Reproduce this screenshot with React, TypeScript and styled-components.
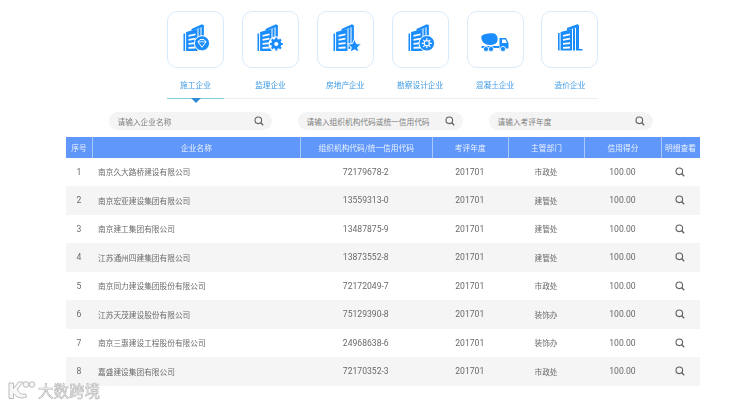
import React from "react";
import styled, { createGlobalStyle } from "styled-components";

const Global = createGlobalStyle`
  html, body { margin: 0; padding: 0; background: #fff; }
  body { font-family: "Noto Sans CJK SC", "Noto Sans", sans-serif; overflow: hidden; }
`;

const Page = styled.div`
  position: relative;
  width: 754px;
  height: 405px;
  padding-top: 11px;
  box-sizing: border-box;
  filter: blur(0.35px);
`;

const Tabs = styled.nav`
  display: flex;
  gap: 17.9px;
  width: 431px;
  height: 87px;
  margin-left: 167px;
  border-bottom: 1px solid #ebeff3;
`;

const Tab = styled.div<{ $active?: boolean }>`
  position: relative;
  width: 57px;
  height: 88px;
  box-sizing: border-box;
  display: flex;
  flex-direction: column;
  align-items: center;
  border-bottom: 1px solid ${(p) => (p.$active ? "#7fd0dc" : "transparent")};
  ${(p) =>
    p.$active &&
    `&::after {
      content: "";
      position: absolute;
      left: 24px;
      top: 87px;
      border-left: 5px solid transparent;
      border-right: 5px solid transparent;
      border-top: 5px solid #2f8ad6;
    }`}
`;

const Tile = styled.div`
  width: 57px;
  height: 57px;
  box-sizing: border-box;
  border: 1px solid #d8ebfc;
  border-radius: 10px;
  display: flex;
  align-items: center;
  justify-content: center;
`;

const TabLabel = styled.span`
  margin-top: 11px;
  font-size: 7.7px;
  line-height: 12px;
  color: #3f9be6;
  white-space: nowrap;
`;

const Searches = styled.div`
  display: flex;
  gap: 26px;
  margin: 13px 0 0 109px;
`;

const SearchBox = styled.div<{ $w: number }>`
  width: ${(p) => p.$w}px;
  height: 18px;
  border-radius: 9px;
  background: #f4f4f4;
  display: flex;
  align-items: center;
  justify-content: space-between;
  box-sizing: border-box;
  padding: 0 8px 0 8.5px;
  font-size: 7.7px;
  color: #808080;
  white-space: nowrap;
`;

const Table = styled.div`
  width: 633.5px;
  margin: 7px 0 0 66px;
`;

const cols = "26px 208px 131.5px 76.5px 76px 77px 38px";

const HeadRow = styled.div`
  display: grid;
  grid-template-columns: ${cols};
  height: 20.5px;
  background: #6097fb;
`;

const HeadCell = styled.div`
  display: flex;
  align-items: center;
  justify-content: center;
  font-size: 7.7px;
  color: #e9f1ff;
  white-space: nowrap;
  border-left: 1px solid #a9c8fc;
  &:first-child { border-left: 0; }
`;

const Row = styled.div<{ $even: boolean }>`
  display: grid;
  grid-template-columns: ${cols};
  height: 28.5px;
  background: ${(p) => (p.$even ? "#f5f5f5" : "#fff")};
`;

const Cell = styled.div<{ $left?: boolean }>`
  display: flex;
  align-items: center;
  justify-content: ${(p) => (p.$left ? "flex-start" : "center")};
  padding-left: ${(p) => (p.$left ? "6px" : "0")};
  font-size: 7.7px;
  color: #6a6a6a;
  white-space: nowrap;
`;

const Num = styled.span`
  font-family: Roboto, "Noto Sans", sans-serif;
  font-size: 8.6px;
  color: #6a6a6a;
`;

const Watermark = styled.div`
  position: absolute;
  left: 8px;
  top: 380px;
  display: flex;
  align-items: center;
  gap: 2px;
`;

const WatermarkText = styled.span`
  font-size: 15.5px;
  line-height: 20px;
  color: #f7f7f7;
  -webkit-text-stroke: 0.6px #b4b4b4;
  white-space: nowrap;
`;

const BLUE = "#1a8cfb";

const TruckSvg = styled.svg`
  margin-top: 6px;
`;

const BuildingSvg = styled.svg`
  overflow: visible;
  margin-bottom: 3px;
`;

const TallBuildingSvg = styled.svg`
  margin: 0 0 3px 3px;
`;

const Tower = ({ shift }: { shift: number }) => (
  <g transform={`translate(${shift} 0)`}>
    <path d="M8 5 L19 0 V3 L8 7 Z" fill={BLUE} />
    <path d="M18 1 h2.4 v22 h-2.4 Z" fill={BLUE} />
    <path d="M0 9.5 h1.6 v17.5 h-1.6 Z" fill={BLUE} />
    <path d="M2.6 8 L14 5 V27 H2.6 Z" fill={BLUE} />
    <path d="M15 4.5 L17 4 V25 H15 Z" fill={BLUE} />
    <g fill="#fff">
      <path d="M5 11 L12 9.4 V11.2 L5 12.8 Z" />
      <path d="M5 15 L12 13.8 V15.6 L5 16.8 Z" />
      <path d="M5 19 L12 18.2 V20 L5 20.8 Z" />
      <path d="M5 23 L12 22.6 V24.4 L5 24.8 Z" />
    </g>
  </g>
);

const Badge = ({ kind }: { kind: string }) => {
  if (kind === "gem")
    return (
      <g transform="translate(20 19.3)">
        <circle r="7.6" fill={BLUE} stroke="#fff" strokeWidth="1" />
        <path d="M-4 -1.5 L-2 -3.7 H2 L4 -1.5 L0 4 Z" fill="none" stroke="#fff" strokeWidth="1" />
        <path d="M-4 -1.5 H4" stroke="#fff" strokeWidth="0.8" />
      </g>
    );
  if (kind === "gear")
    return (
      <g transform="translate(20.3 20)">
        <circle r="7.8" fill="#fff" />
        <circle r="3.6" fill="none" stroke={BLUE} strokeWidth="3" />
        <path
          d="M0 -6.5 v3 M0 3.5 v3 M-6.5 0 h3 M3.5 0 h3 M-4.6 -4.6 l2 2 M2.6 2.6 l2 2 M4.6 -4.6 l-2 2 M-2.6 2.6 l-2 2"
          stroke={BLUE}
          strokeWidth="2.2"
        />
      </g>
    );
  if (kind === "star")
    return (
      <path
        transform="translate(23.5 22)"
        d="M0 -7 L2 -2.4 L7 -2 L3.2 1.4 L4.3 6.3 L0 3.8 L-4.3 6.3 L-3.2 1.4 L-7 -2 L-2 -2.4 Z"
        fill={BLUE}
        stroke="#fff"
        strokeWidth="1"
      />
    );
  if (kind === "wheel")
    return (
      <g transform="translate(20.8 19.3)">
        <circle r="7.8" fill={BLUE} stroke="#fff" strokeWidth="1" />
        <circle r="2.6" fill="none" stroke="#fff" strokeWidth="1.2" />
        <path
          d="M0 -5 v2 M0 3 v2 M-5 0 h2 M3 0 h2 M-3.5 -3.5 l1.5 1.5 M2 2 l1.5 1.5 M3.5 -3.5 l-1.5 1.5 M-2 2 l-1.5 1.5"
          stroke="#fff"
          strokeWidth="1.2"
        />
      </g>
    );
  return null;
};

const BuildingIcon = ({ kind, shift = 1.5 }: { kind: string; shift?: number }) => (
  <BuildingSvg width="28" height="28" viewBox="0 0 28 28" aria-hidden>
    <Tower shift={shift} />
    <Badge kind={kind} />
  </BuildingSvg>
);

const TruckIcon = () => (
  <TruckSvg width="28" height="19" viewBox="0 0 28 19" aria-hidden>
    <path d="M0.5 3 C3 0.5 9 -0.3 13 0.5 C16 1.5 17 4.5 16.5 7.5 C16 10.5 13 12 8.5 12 C4 12 -0.5 8.5 0.5 3 Z" fill={BLUE} />
    <path d="M18.5 5 H25 L27.5 10 V15.5 H18.5 Z" fill={BLUE} />
    <path d="M21 6.5 H24.4 L26 10 H21 Z" fill="#fff" />
    <path d="M0.5 13 H18 V15 H0.5 Z" fill={BLUE} />
    <g fill={BLUE} stroke="#fff" strokeWidth="0.8">
      <circle cx="5" cy="16" r="2.6" />
      <circle cx="10" cy="16" r="2.6" />
      <circle cx="22" cy="16" r="2.6" />
    </g>
  </TruckSvg>
);

const ChartBuildingIcon = () => (
  <TallBuildingSvg width="26" height="28" viewBox="0 0 26 28" aria-hidden>
    <path d="M9 4 L20 0 V3 L9 6.5 Z" fill={BLUE} />
    <path d="M18 1 h3 v24 h3.5 v1.4 H18 Z" fill={BLUE} />
    <path d="M0 9 h1.6 v17.4 h-1.6 Z" fill={BLUE} />
    <path d="M2.6 8 L14 5 V26.4 H2.6 Z" fill={BLUE} />
    <path d="M15 4.5 L17 4 V26.4 H15 Z" fill={BLUE} />
    <g fill="#fff">
      <path d="M5 11 L12 9.4 V11.2 L5 12.8 Z" />
      <path d="M5 15 L12 13.8 V15.6 L5 16.8 Z" />
      <path d="M5 19 L12 18.2 V20 L5 20.8 Z" />
      <path d="M5 23 L12 22.6 V24.4 L5 24.8 Z" />
    </g>
  </TallBuildingSvg>
);

const Lens = () => (
  <svg width="10" height="10" viewBox="0 0 10 10" fill="none" aria-hidden>
    <circle cx="4.3" cy="4.3" r="3.3" stroke="#606060" strokeWidth="1.1" />
    <path d="M6.8 6.8 L9.2 9.2" stroke="#606060" strokeWidth="1.3" />
  </svg>
);

const WatermarkLogo = () => (
  <svg width="28" height="20" viewBox="0 0 28 20" fill="#f7f7f7" stroke="#b4b4b4" strokeWidth="0.9" aria-hidden>
    <path d="M1 3 H5.5 V8.5 L10.5 2 H15 L9.5 9 C10.5 13 13.5 14.8 17.5 14 L18.5 17 C12.5 19.3 8 17 5.5 13.5 V18.5 H1 Z" />
    <circle cx="18" cy="4.5" r="2.8" />
    <circle cx="24" cy="4.5" r="2.8" />
  </svg>
);

const tabs = [
  { label: "施工企业", icon: <BuildingIcon kind="gem" />, active: true },
  { label: "监理企业", icon: <BuildingIcon kind="gear" /> },
  { label: "房地产企业", icon: <BuildingIcon kind="star" shift={2.5} /> },
  { label: "勘察设计企业", icon: <BuildingIcon kind="wheel" shift={2.5} /> },
  { label: "混凝土企业", icon: <TruckIcon /> },
  { label: "造价企业", icon: <ChartBuildingIcon /> },
];

const rows = [
  ["南京久大路桥建设有限公司", "72179678-2", "市政处"],
  ["南京宏亚建设集团有限公司", "13559313-0", "建管处"],
  ["南京建工集团有限公司", "13487875-9", "建管处"],
  ["江苏通州四建集团有限公司", "13873552-8", "建管处"],
  ["南京同力建设集团股份有限公司", "72172049-7", "市政处"],
  ["江苏天茂建设股份有限公司", "75129390-8", "装饰办"],
  ["南京三惠建设工程股份有限公司", "24968638-6", "装饰办"],
  ["嘉盛建设集团有限公司", "72170352-3", "市政处"],
];

const heads = ["序号", "企业名称", "组织机构代码/统一信用代码", "考评年度", "主管部门", "信用得分", "明细查看"];

export default function App() {
  return (
    <Page>
      <Global />
      <Tabs>
        {tabs.map((t) => (
          <Tab key={t.label} $active={t.active}>
            <Tile>{t.icon}</Tile>
            <TabLabel>{t.label}</TabLabel>
          </Tab>
        ))}
      </Tabs>
      <Searches>
        <SearchBox $w={163}>请输入企业名称<Lens /></SearchBox>
        <SearchBox $w={165}>请输入组织机构代码或统一信用代码<Lens /></SearchBox>
        <SearchBox $w={164}>请输入考评年度<Lens /></SearchBox>
      </Searches>
      <Table>
        <HeadRow>
          {heads.map((h) => (
            <HeadCell key={h}>{h}</HeadCell>
          ))}
        </HeadRow>
        {rows.map((r, i) => (
          <Row key={r[1]} $even={i % 2 === 1}>
            <Cell><Num>{i + 1}</Num></Cell>
            <Cell $left>{r[0]}</Cell>
            <Cell><Num>{r[1]}</Num></Cell>
            <Cell><Num>201701</Num></Cell>
            <Cell>{r[2]}</Cell>
            <Cell><Num>100.00</Num></Cell>
            <Cell><Lens /></Cell>
          </Row>
        ))}
      </Table>
      <Watermark>
        <WatermarkLogo />
        <WatermarkText>大数跨境</WatermarkText>
      </Watermark>
    </Page>
  );
}
